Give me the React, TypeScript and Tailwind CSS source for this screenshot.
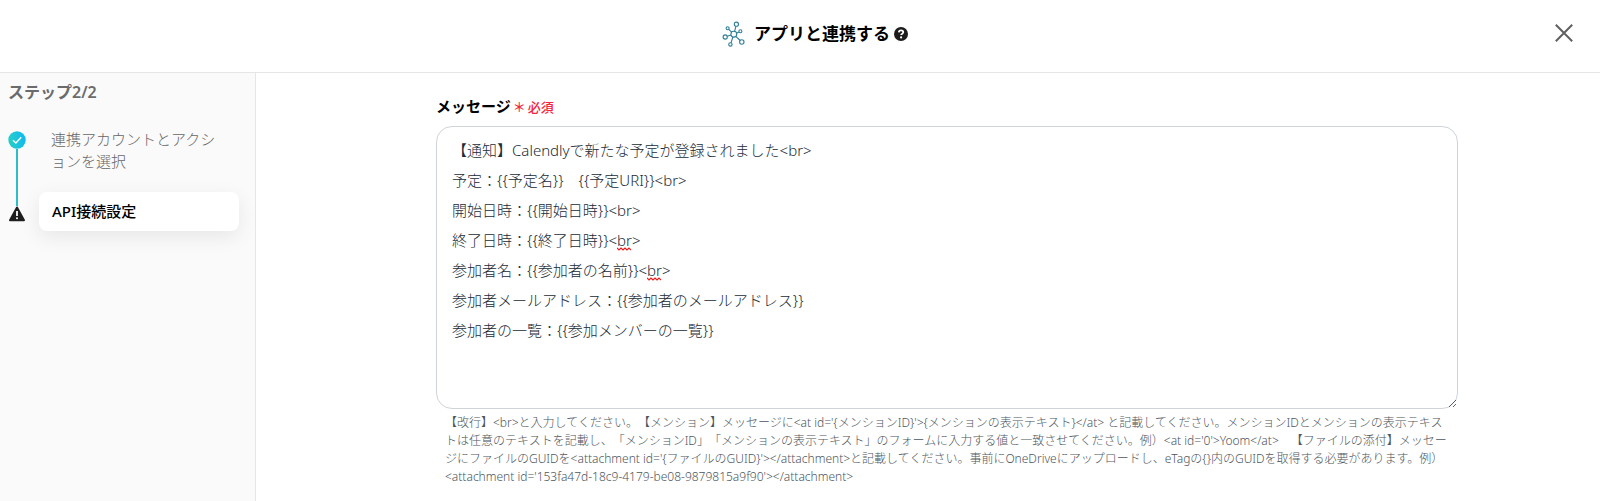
import { useState } from "react";

const DEFAULT_MESSAGE = [
    "【通知】Calendlyで新たな予定が登録されました<br>",
    "予定：{{予定名}}　{{予定URI}}<br>",
    "開始日時：{{開始日時}}<br>",
    "終了日時：{{終了日時}}<br>",
    "参加者名：{{参加者の名前}}<br>",
    "参加者メールアドレス：{{参加者のメールアドレス}}",
    "参加者の一覧：{{参加メンバーの一覧}}",
].join("\n");

const HELP_TEXT =
    "【改行】<br>と入力してください。【メンション】メッセージに<at id='{メンションID}'>{メンションの表示テキスト}</at> と記載してください。メンションIDとメンションの表示テキストは任意のテキストを記載し、「メンションID」「メンションの表示テキスト」のフォームに入力する値と一致させてください。例）<at id='0'>Yoom</at>　【ファイルの添付】メッセージにファイルのGUIDを<attachment id='{ファイルのGUID}'></attachment>と記載してください。事前にOneDriveにアップロードし、eTagの{}内のGUIDを取得する必要があります。例）<attachment id='153fa47d-18c9-4179-be08-9879815a9f90'></attachment>";

const AppIcon = () => (
    <svg
        viewBox="0 0 24 26"
        className="h-[26px] w-6"
        fill="none"
        stroke="#2f7f98"
        strokeWidth="1.1"
        aria-hidden="true"
    >
        <circle cx="11.8" cy="13.2" r="2.9" />
        <circle cx="14.4" cy="3.2" r="2.1" />
        <circle cx="5.6" cy="7.2" r="1.5" />
        <circle cx="18.4" cy="10.2" r="1.5" />
        <circle cx="3.2" cy="16" r="2.1" />
        <circle cx="8.4" cy="23.4" r="1.7" />
        <circle cx="19.8" cy="21" r="2.2" />
        <path d="M12.6 10.4 13.9 5.3M9.7 11.2 6.7 8.3M14.5 12.2l2.5-1.3M9 14.1l-3.7 1.2M10.9 16 9 21.8M13.8 15.3l4.4 4.2" />
    </svg>
);

const Header = () => (
    <header className="relative flex h-[73px] items-center justify-center border-b border-[#e5e6e8] pb-1 pl-[30px]">
        <AppIcon />
        <h1 className="ml-2 text-[17px] font-semibold text-black">
            アプリと連携する
        </h1>
        <button type="button" aria-label="ヘルプ" className="ml-1 pb-px">
            <svg viewBox="0 0 14 14" className="size-[14px]">
                <circle cx="7" cy="7" r="7" fill="#1c1c1c" />
                <path
                    d="M4.8 5.4c.1-1.3 1-2 2.2-2 1.3 0 2.3.8 2.3 1.9 0 1.4-2.2 1.4-2.2 2.8"
                    fill="none"
                    stroke="#fff"
                    strokeWidth="1.7"
                />
                <circle cx="7.1" cy="10.4" r="1.1" fill="#fff" />
            </svg>
        </button>
        <button
            type="button"
            aria-label="閉じる"
            className="absolute right-[27px] top-6"
        >
            <svg
                viewBox="0 0 18 18"
                className="size-[18px]"
                stroke="#5f6062"
                strokeWidth="2"
            >
                <path d="M.8.8 17.2 17.2M17.2.8.8 17.2" />
            </svg>
        </button>
    </header>
);

const CheckIcon = () => (
    <svg viewBox="0 0 18 18" className="size-[18px]" aria-hidden="true">
        <defs>
            <linearGradient id="step-done" x1="0" y1="0.6" x2="1" y2="0.4">
                <stop offset="0" stopColor="#25d0c4" />
                <stop offset="1" stopColor="#12b8f2" />
            </linearGradient>
        </defs>
        <circle cx="9" cy="9" r="8.7" fill="url(#step-done)" />
        <path
            d="m5 9.2 2.9 2.8L13.2 6.3"
            fill="none"
            stroke="#fff"
            strokeWidth="1.4"
        />
    </svg>
);

const WarningIcon = () => (
    <svg viewBox="0 0 18 16" className="h-4 w-[18px]" aria-hidden="true">
        <path
            d="M9 1.5 16 14.2H2Z"
            fill="#1f1f1f"
            stroke="#1f1f1f"
            strokeWidth="2"
            strokeLinejoin="round"
        />
        <path d="M9 5v5" stroke="#fff" strokeWidth="1.8" />
        <circle cx="9" cy="12.3" r="1" fill="#fff" />
    </svg>
);

const Sidebar = () => (
    <nav className="w-64 shrink-0 border-r border-[#e5e6e8] bg-[#fafafa] pl-2 pr-4 pt-2">
        <p className="text-[16px] font-semibold leading-[22px] text-[#6b6b6b]">
            ステップ2/2
        </p>
        <ol className="mt-6 flex gap-[13px]">
            <li className="flex flex-col items-center pt-1" aria-hidden="true">
                <CheckIcon />
                <span className="h-[57px] w-[2px] bg-[#28bfc8]" />
                <WarningIcon />
            </li>
            <li className="flex-1">
                <a
                    href="#account"
                    className="block px-3 pt-px text-[15px] font-light leading-[22px] text-[#666]"
                >
                    連携アカウントとアクションを選択
                </a>
                <a
                    href="#api"
                    aria-current="step"
                    className="mt-5 block rounded-lg bg-white px-[13px] py-2 text-[15px] font-medium leading-[23px] text-black shadow-[0_6px_20px_rgba(0,0,0,0.08)]"
                >
                    API接続設定
                </a>
            </li>
        </ol>
    </nav>
);

const Squiggle = ({ className }: { className: string }) => (
    <svg
        viewBox="0 0 14 4"
        className={`pointer-events-none absolute h-1 w-[14px] ${className}`}
        fill="none"
        stroke="#f01818"
        strokeWidth="1.2"
        aria-hidden="true"
    >
        <path d="M0 1l2 2 2-2 2 2 2-2 2 2 2-2 2 2" />
    </svg>
);

const MessageField = () => {
    const [message, setMessage] = useState(DEFAULT_MESSAGE);

    return (
        <div>
            <label
                htmlFor="message"
                className="flex items-baseline gap-[2px] text-[15px] font-semibold leading-6 text-black"
            >
                メッセージ
                <span className="flex gap-[2px] text-[13px] font-medium text-[#f5233c]">
                    <span>＊</span>
                    <span>必須</span>
                </span>
            </label>
            <div className="relative mt-[7px]">
                <textarea
                    id="message"
                    value={message}
                    onChange={(e) => setMessage(e.target.value)}
                    spellCheck={false}
                    aria-describedby="message-help"
                    className="block h-[283px] w-full resize rounded-2xl border border-[#ced4da] bg-white px-[15px] py-2 text-[15px] font-light leading-[30px] text-[#212b36] outline-none"
                />
                <Squiggle className="left-[181px] top-[121px]" />
                <Squiggle className="left-[211px] top-[151px]" />
            </div>
            <p
                id="message-help"
                className="mt-[5px] pl-[9px] pr-1 text-[12px] font-light leading-[18px] text-[#4d565e]"
            >
                {HELP_TEXT}
            </p>
        </div>
    );
};

const App = () => {
    return (
        <div
            lang="ja"
            className="flex min-h-screen flex-col bg-white font-['Noto_Sans','Noto_Sans_CJK_JP',sans-serif] [text-spacing-trim:space-all]"
        >
            <Header />
            <div className="flex flex-1">
                <Sidebar />
                <main className="min-w-0 flex-1 pl-[180px] pr-[142px] pt-[21px]">
                    <MessageField />
                </main>
            </div>
        </div>
    );
};

export default App;
